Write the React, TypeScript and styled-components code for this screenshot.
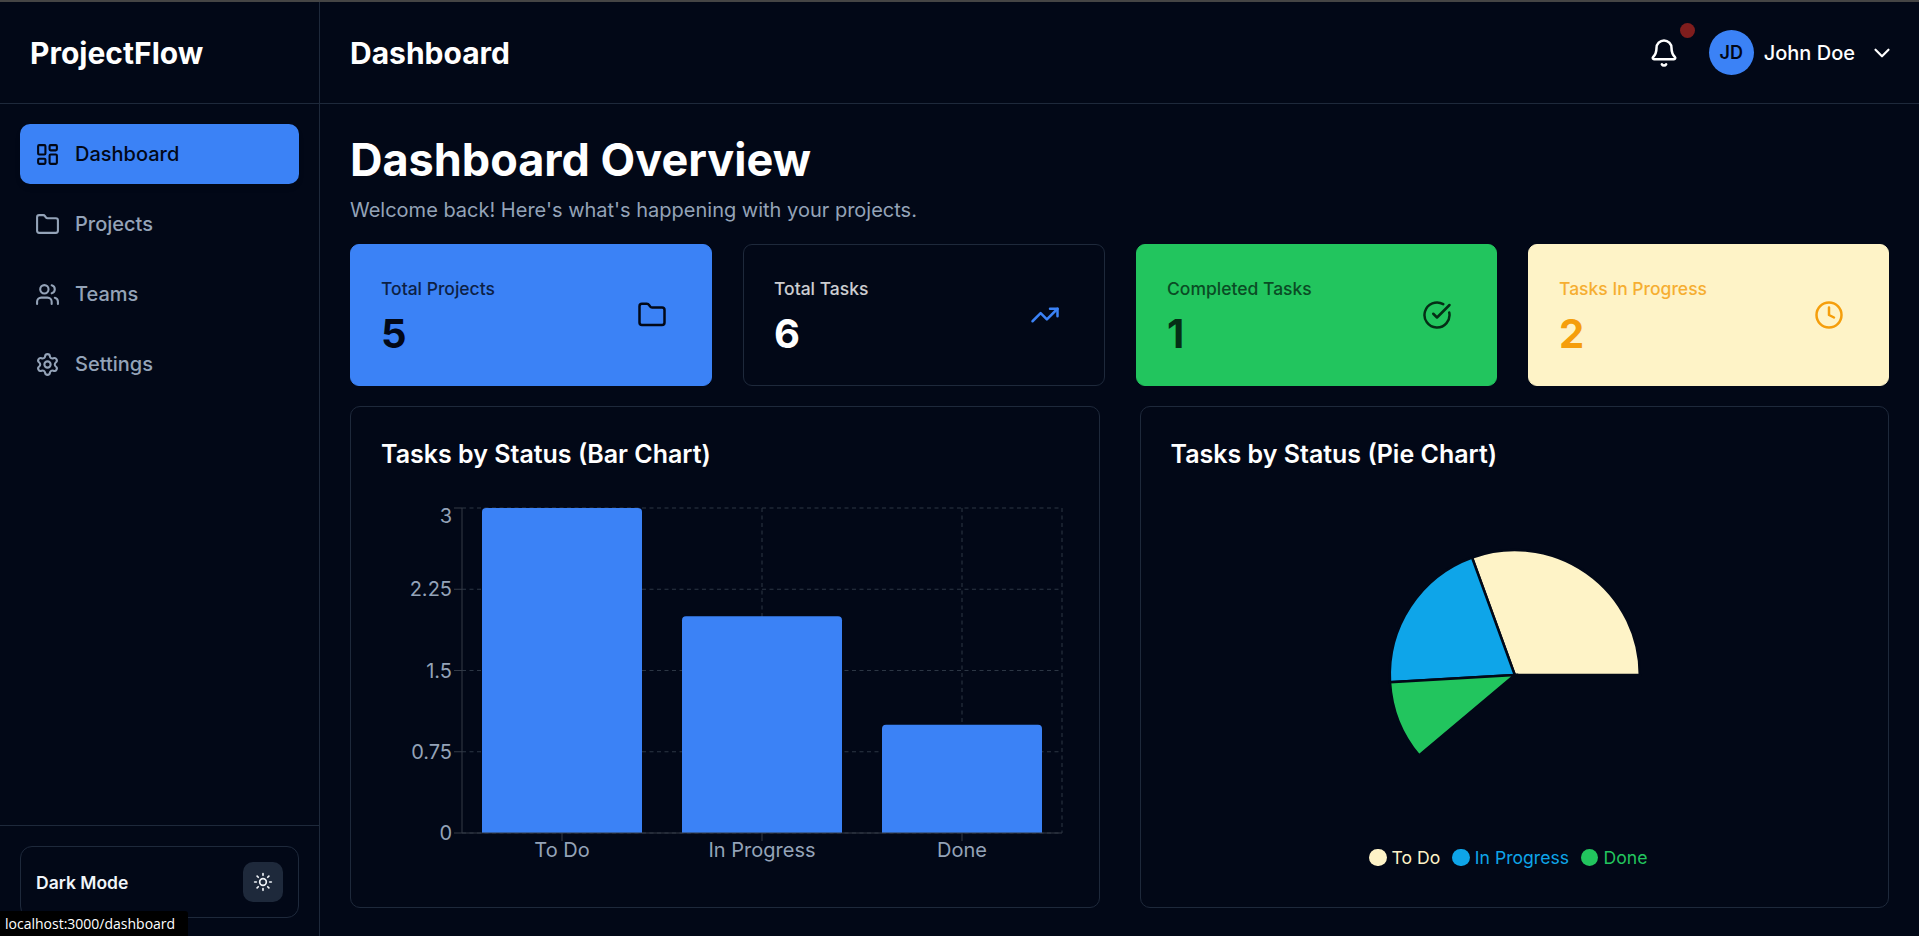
import React from 'react';
import styled, {createGlobalStyle} from 'styled-components';
import {
  Bell,
  ChevronDown,
  CircleCheckBig,
  Clock,
  Folder,
  LayoutDashboard,
  Settings,
  Sun,
  TrendingUp,
  Users,
} from 'lucide-react';

const BG = '#020817';
const LINE = '#1e293b';
const BLUE = '#3b82f6';
const MUTED = '#94a3b8';

const GlobalStyle = createGlobalStyle`
  html, body {
    margin: 0;
    height: 100%;
    background: ${BG};
    overflow: hidden;
  }
  * {
    box-sizing: border-box;
  }
  body {
    font-family: 'Inter', 'Liberation Sans', sans-serif;
    color: #fff;
  }
`;

const TopEdge = styled.div`
  height: 2px;
  background: #454545;
`;

const Shell = styled.div`
  display: flex;
  height: 934px;
`;

const Sidebar = styled.aside`
  flex: 0 0 320px;
  display: flex;
  flex-direction: column;
  border-right: 1px solid ${LINE};
`;

const Logo = styled.div`
  height: 102px;
  padding: 0 30px;
  display: flex;
  align-items: center;
  border-bottom: 1px solid ${LINE};
  font-size: 30px;
  font-weight: 700;
`;

const Nav = styled.nav`
  flex: 1;
  display: flex;
  flex-direction: column;
  gap: 10px;
  padding: 20px;
`;

const NavItem = styled.div<{ $active?: boolean }>`
  height: 60px;
  padding: 0 15px;
  display: flex;
  align-items: center;
  gap: 15px;
  border-radius: 10px;
  font-size: 20px;
  font-weight: 500;
  color: ${p => (p.$active ? BG : MUTED)};
  background: ${p => (p.$active ? BLUE : 'transparent')};
  box-shadow: ${p => (p.$active ? '0 4px 6px -1px rgba(0, 0, 0, 0.1)' : 'none')};
`;

const SidebarFoot = styled.div`
  padding: 20px 20px 18px;
  border-top: 1px solid ${LINE};
`;

const ThemeRow = styled.div`
  height: 72px;
  padding: 0 15px;
  display: flex;
  align-items: center;
  justify-content: space-between;
  border: 1px solid ${LINE};
  border-radius: 12px;
  font-size: 17.5px;
  font-weight: 600;
  color: #f1f5f9;
`;

const ThemeButton = styled.div`
  width: 40px;
  height: 40px;
  display: flex;
  align-items: center;
  justify-content: center;
  border-radius: 10px;
  background: ${LINE};
`;

const Column = styled.div`
  flex: 1;
  min-width: 0;
  display: flex;
  flex-direction: column;
`;

const TopBar = styled.header`
  height: 102px;
  padding: 0 24px 0 30px;
  display: flex;
  align-items: center;
  justify-content: space-between;
  border-bottom: 1px solid ${LINE};
`;

const TopTitle = styled.div`
  font-size: 30px;
  font-weight: 700;
`;

const TopActions = styled.div`
  display: flex;
  align-items: center;
`;

const BellWrap = styled.div`
  position: relative;
  display: flex;
  margin-right: 30px;
`;

const BellDot = styled.span`
  position: absolute;
  top: -15px;
  right: -16px;
  width: 15px;
  height: 15px;
  border-radius: 50%;
  background: #7f1d1d;
`;

const Avatar = styled.div`
  width: 45px;
  height: 45px;
  display: flex;
  align-items: center;
  justify-content: center;
  border-radius: 50%;
  background: ${BLUE};
  color: ${BG};
  font-size: 18px;
  font-weight: 600;
`;

const UserName = styled.span`
  margin: 0 14px 0 10px;
  font-size: 20px;
  font-weight: 500;
`;

const Main = styled.main`
  flex: 1;
  min-height: 0;
  padding: 30px 30px 28px;
  display: flex;
  flex-direction: column;
`;

const PageTitle = styled.h1`
  margin: 0;
  font-size: 45px;
  line-height: 52px;
  font-weight: 700;
`;

const PageSub = styled.p`
  margin: 10px 0 20px;
  font-size: 20px;
  line-height: 28px;
  color: ${MUTED};
`;

const StatGrid = styled.div`
  display: grid;
  grid-template-columns: 362px 362px 361px 361px;
  column-gap: 31px;
`;

const StatCard = styled.div<{ $bg: string; $fg: string; $edge: string }>`
  height: 142px;
  padding: 30px 44px 30px 30px;
  display: flex;
  align-items: center;
  justify-content: space-between;
  border: 1px solid ${p => p.$edge};
  border-radius: 9px;
  background: ${p => p.$bg};
  color: ${p => p.$fg};
`;

const StatBody = styled.div`
  padding-top: 5px;
`;

const StatLabel = styled.div<{ $dim: number }>`
  font-size: 17.5px;
  line-height: 24px;
  font-weight: 500;
  opacity: ${p => p.$dim};
`;

const StatValue = styled.div`
  margin-top: 9px;
  font-size: 40px;
  line-height: 48px;
  font-weight: 700;
`;

const StatIcon = styled.div<{ $color: string }>`
  display: flex;
  color: ${p => p.$color};
`;

const ChartGrid = styled.div`
  flex: 1;
  min-height: 0;
  margin-top: 20px;
  display: grid;
  grid-template-columns: 1fr 1fr;
  gap: 40px;
`;

const ChartCard = styled.section`
  padding: 30px;
  border: 1px solid ${LINE};
  border-radius: 10px;
`;

const ChartTitle = styled.h2`
  margin: 0 0 17px;
  font-size: 25px;
  line-height: 34px;
  font-weight: 600;
`;

const ChartSvg = styled.svg`
  display: block;
  width: 100%;
  font-family: 'Inter', 'Liberation Sans', sans-serif;
  font-size: 20px;
`;

const Legend = styled.div`
  display: flex;
  justify-content: center;
  gap: 12px;
  padding-right: 12px;
  font-size: 17.6px;
`;

const LegendItem = styled.div<{ $color: string }>`
  display: flex;
  align-items: center;
  gap: 5px;
  color: ${p => p.$color};
`;

const LegendDot = styled.span<{ $color: string }>`
  width: 17.5px;
  height: 17.5px;
  border-radius: 50%;
  background: ${p => p.$color};
`;

const StatusTip = styled.div`
  position: fixed;
  left: 0;
  bottom: 0;
  height: 25px;
  padding: 0 13px 0 5px;
  display: flex;
  align-items: center;
  background: #000;
  border-top-right-radius: 3px;
  font-family: 'Open Sans', 'Liberation Sans', sans-serif;
  font-size: 14px;
  color: #fff;
`;

const navItems = [
  {label: 'Dashboard', icon: LayoutDashboard, active: true},
  {label: 'Projects', icon: Folder},
  {label: 'Teams', icon: Users},
  {label: 'Settings', icon: Settings},
];

const stats = [
  {label: 'Total Projects', value: 5, icon: Folder, bg: BLUE, fg: BG, edge: BLUE, iconColor: BG, dim: 0.8},
  {label: 'Total Tasks', value: 6, icon: TrendingUp, bg: BG, fg: '#fff', edge: LINE, iconColor: BLUE, dim: 0.8},
  {label: 'Completed Tasks', value: 1, icon: CircleCheckBig, bg: '#22c55e', fg: '#052e16', edge: '#22c55e', iconColor: '#052e16', dim: 0.8},
  {label: 'Tasks In Progress', value: 2, icon: Clock, bg: '#fef3c7', fg: '#f59e0b', edge: '#fef3c7', iconColor: '#f59e0b', dim: 0.8},
];

const bars = [
  {name: 'To Do', value: 3},
  {name: 'In Progress', value: 2},
  {name: 'Done', value: 1},
];

const slices = [
  {name: 'To Do', value: 3, color: '#fef3c7'},
  {name: 'In Progress', value: 2, color: '#0ea5e9'},
  {name: 'Done', value: 1, color: '#22c55e'},
];

const PLOT = {left: 81, right: 681, top: 20, bottom: 345};
const AXIS = '#343b47';
const GRID = '#2c3644';

const BarChart = () => {
  const yTicks = [0, 0.75, 1.5, 2.25, 3];
  const step = (PLOT.right - PLOT.left) / bars.length;
  const toY = (v: number) => PLOT.bottom - (v / 3) * (PLOT.bottom - PLOT.top);
  return (
    <ChartSvg height={388} viewBox="0 0 687.5 388" preserveAspectRatio="xMinYMin">
      <g stroke={GRID} strokeDasharray="4 3.5">
        {yTicks.map(t => (
          <line key={t} x1={PLOT.left} x2={PLOT.right} y1={toY(t)} y2={toY(t)}/>
        ))}
        {bars.map((b, i) => (
          <line key={b.name} x1={PLOT.left + step * i + step / 2} x2={PLOT.left + step * i + step / 2} y1={PLOT.top} y2={PLOT.bottom}/>
        ))}
        <line x1={PLOT.right} x2={PLOT.right} y1={PLOT.top} y2={PLOT.bottom}/>
      </g>
      {bars.map((b, i) => {
        const x = PLOT.left + step * i + 20;
        const y = toY(b.value);
        return (
          <path
            key={b.name}
            fill={BLUE}
            d={`M${x} ${PLOT.bottom}V${y + 4}a4 4 0 0 1 4 -4H${x + 156}a4 4 0 0 1 4 4V${PLOT.bottom}Z`}
          />
        );
      })}
      <g stroke={AXIS}>
        <line x1={PLOT.left} x2={PLOT.left} y1={PLOT.top} y2={PLOT.bottom}/>
        <line x1={PLOT.left} x2={PLOT.right} y1={PLOT.bottom} y2={PLOT.bottom}/>
        {yTicks.map(t => (
          <line key={t} x1={PLOT.left - 8} x2={PLOT.left} y1={toY(t)} y2={toY(t)}/>
        ))}
        {bars.map((b, i) => (
          <line key={b.name} x1={PLOT.left + step * i + step / 2} x2={PLOT.left + step * i + step / 2} y1={PLOT.bottom} y2={PLOT.bottom + 8}/>
        ))}
      </g>
      <g fill={MUTED}>
        {yTicks.map(t => (
          <text key={t} x={PLOT.left - 10} y={t === 3 ? toY(t) + 15 : toY(t) + 7} textAnchor="end">{t}</text>
        ))}
        {bars.map((b, i) => (
          <text key={b.name} x={PLOT.left + step * i + step / 2} y={PLOT.bottom + 24} textAnchor="middle">{b.name}</text>
        ))}
      </g>
    </ChartSvg>
  );
};

const polar = (cx: number, cy: number, r: number, deg: number) => {
  const rad = (deg * Math.PI) / 180;
  return [cx + r * Math.cos(rad), cy - r * Math.sin(rad)];
};

const PieChart = () => {
  const cx = 343.8;
  const cy = 187;
  const r = 125;
  const total = slices.reduce((sum, s) => sum + s.value, 0);
  let angle = 0;
  return (
    <ChartSvg height={359} viewBox="0 0 687.5 359" preserveAspectRatio="xMinYMin">
      {slices.map(s => {
        const from = angle;
        angle += (s.value / total) * 220;
        const [x1, y1] = polar(cx, cy, r, from);
        const [x2, y2] = polar(cx, cy, r, angle);
        return (
          <path
            key={s.name}
            fill={s.color}
            stroke={BG}
            strokeWidth={2.5}
            d={`M${cx} ${cy}L${x1} ${y1}A${r} ${r} 0 0 0 ${x2} ${y2}Z`}
          />
        );
      })}
    </ChartSvg>
  );
};

export default function App() {
  return (
    <>
      <GlobalStyle/>
      <TopEdge/>
      <Shell>
        <Sidebar>
          <Logo>ProjectFlow</Logo>
          <Nav>
            {navItems.map(({label, icon: Icon, active}) => (
              <NavItem key={label} $active={active}>
                <Icon size={25}/>
                {label}
              </NavItem>
            ))}
          </Nav>
          <SidebarFoot>
            <ThemeRow>
              Dark Mode
              <ThemeButton><Sun size={20}/></ThemeButton>
            </ThemeRow>
          </SidebarFoot>
        </Sidebar>
        <Column>
          <TopBar>
            <TopTitle>Dashboard</TopTitle>
            <TopActions>
              <BellWrap>
                <Bell size={30}/>
                <BellDot/>
              </BellWrap>
              <Avatar>JD</Avatar>
              <UserName>John Doe</UserName>
              <ChevronDown size={26}/>
            </TopActions>
          </TopBar>
          <Main>
            <PageTitle>Dashboard Overview</PageTitle>
            <PageSub>Welcome back! Here's what's happening with your projects.</PageSub>
            <StatGrid>
              {stats.map(({label, value, icon: Icon, bg, fg, edge, iconColor, dim}) => (
                <StatCard key={label} $bg={bg} $fg={fg} $edge={edge}>
                  <StatBody>
                    <StatLabel $dim={dim}>{label}</StatLabel>
                    <StatValue>{value}</StatValue>
                  </StatBody>
                  <StatIcon $color={iconColor}><Icon size={30}/></StatIcon>
                </StatCard>
              ))}
            </StatGrid>
            <ChartGrid>
              <ChartCard>
                <ChartTitle>Tasks by Status (Bar Chart)</ChartTitle>
                <BarChart/>
              </ChartCard>
              <ChartCard>
                <ChartTitle>Tasks by Status (Pie Chart)</ChartTitle>
                <PieChart/>
                <Legend>
                  {slices.map(s => (
                    <LegendItem key={s.name} $color={s.color}>
                      <LegendDot $color={s.color}/>
                      {s.name}
                    </LegendItem>
                  ))}
                </Legend>
              </ChartCard>
            </ChartGrid>
          </Main>
        </Column>
      </Shell>
      <StatusTip>localhost:3000/dashboard</StatusTip>
    </>
  );
}
